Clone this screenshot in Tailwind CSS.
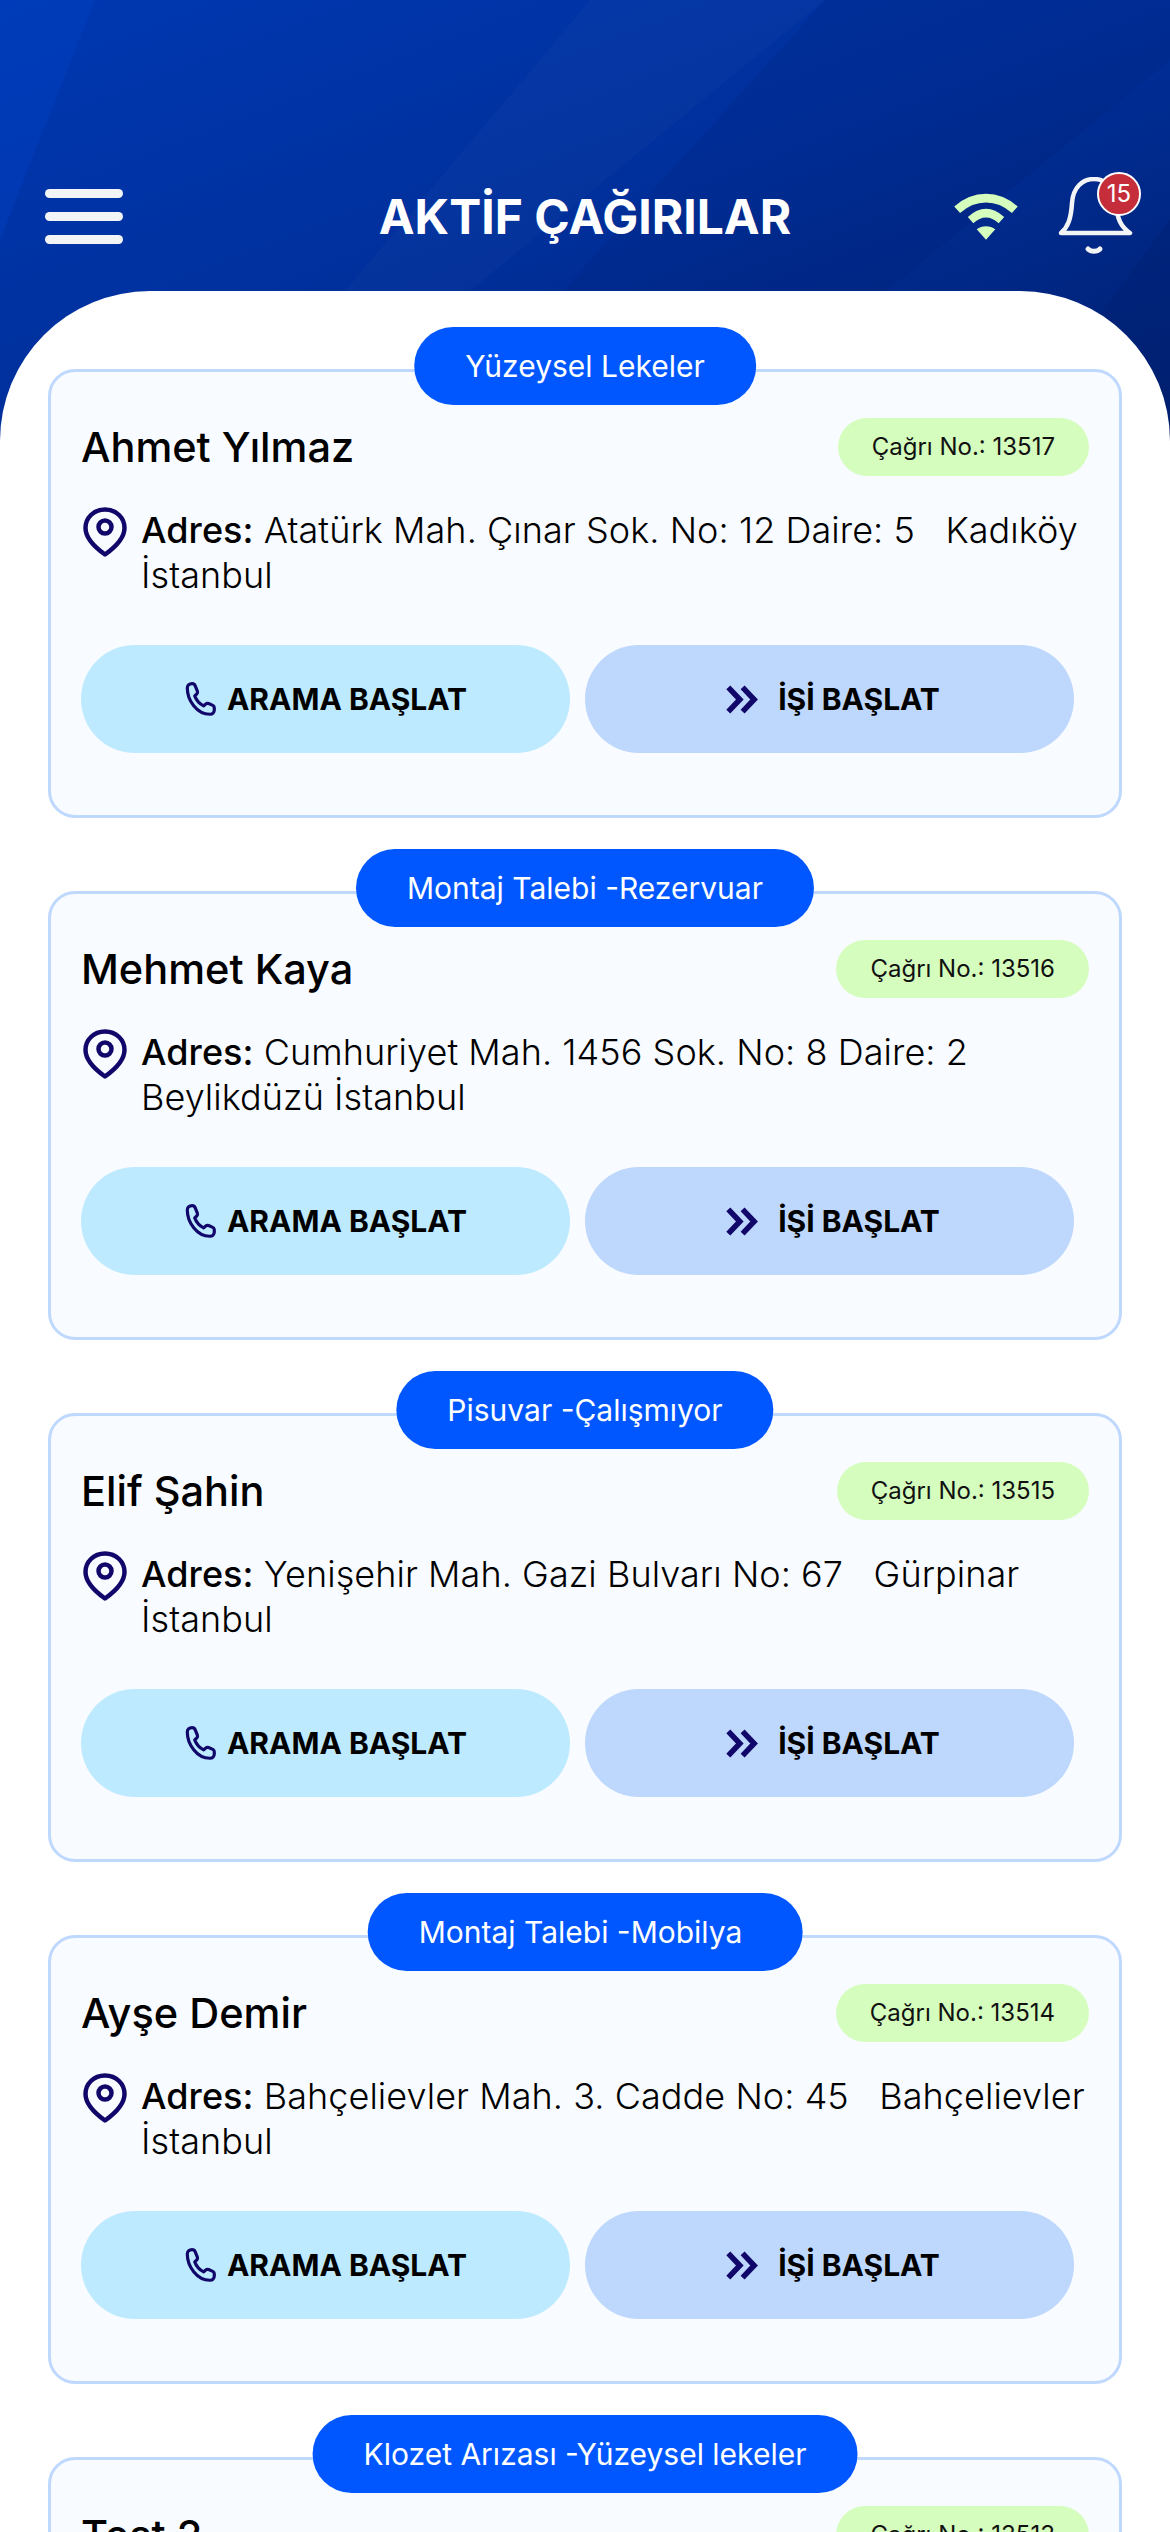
<!DOCTYPE html>
<html lang="tr">
<head>
    <meta charset="UTF-8">
    <meta name="viewport" content="width=device-width, initial-scale=1.0">
    <script src="https://cdn.jsdelivr.net/npm/@tailwindcss/browser@4"></script>
    <title>Aktif Çağırılar</title>
</head>
<body class="bg-white font-[Inter,sans-serif]">
    <svg class="hidden">
        <symbol id="pin" viewBox="0 0 44 50">
            <path d="M22 2.500C10.500 2.500 2.500 11 2.500 21c0 10 9 19 19.500 26.500C32.500 40 41.500 31 41.500 21 41.500 11 33.500 2.500 22 2.500Z" fill="none" stroke="#11076a" stroke-width="4.500" stroke-linejoin="round"/>
            <circle cx="22" cy="20" r="6.500" fill="none" stroke="#11076a" stroke-width="4.500"/>
        </symbol>
        <symbol id="phone" viewBox="0 0 30 34">
            <path d="M3 6.500C3 4 5 2.500 7.500 2.500c1.500 0 2.500.8 3 2l2 5c.4 1 .2 2-.6 2.800L10 14c1.500 4 4.500 7.500 8.500 9.500l1.800-1.700c.8-.7 1.800-.9 2.800-.5l3.500 1.500c1.200.5 1.900 1.500 1.900 2.800v1.900c0 2.300-1.700 3.900-4 3.900C12 31.500 3 18 3 6.500Z" fill="none" stroke="#11076a" stroke-width="3" stroke-linejoin="round"/>
        </symbol>
        <symbol id="chevrons" viewBox="0 0 30 28">
            <path d="M3 3l10.500 11L3 25M16 3l10.500 11L16 25" fill="none" stroke="#11076a" stroke-width="5" stroke-linejoin="miter"/>
        </symbol>
    </svg>

    <div class="h-[2532px] overflow-hidden">
        <!-- Header -->
        <header class="relative h-[450px] -mb-[159px] overflow-hidden bg-linear-to-br from-[#0038b2] via-[#002f9a] to-[#001f6f]">
            <svg class="absolute inset-0 w-full h-full" viewBox="0 0 1170 450" preserveAspectRatio="none">
                <polygon points="0,0 95,0 0,240" fill="#0042c4" opacity=".4"/>
                <polygon points="590,0 825,0 470,291 345,291" fill="#ffffff" opacity=".02"/>
                <polygon points="825,0 1170,0 1170,60 690,450 420,450" fill="#001a66" opacity=".12"/>
                <polygon points="1170,220 1170,450 1000,450" fill="#001a66" opacity=".25"/>
            </svg>
            <div class="relative flex items-start justify-between h-[291px] pt-[177px] pl-[45px] pr-[36px]">
                <div class="flex flex-col gap-[14px] w-[78px] mt-[12px]">
                    <span class="h-[9px] rounded-full bg-[#f3f4f6]"></span>
                    <span class="h-[9px] rounded-full bg-[#f3f4f6]"></span>
                    <span class="h-[9px] rounded-full bg-[#f3f4f6]"></span>
                </div>
                <h1 class="absolute left-0 right-0 top-[187px] text-center text-[48px] leading-[60px] font-bold text-white">AKTİF ÇAĞIRILAR</h1>
                <div class="flex items-start gap-[38px]">
                    <svg class="w-[68px] h-[50px] mt-[15px]" viewBox="0 0 66 48">
                        <path d="M5 17C22 2 44 2 61 17" fill="none" stroke="#d5fdbd" stroke-width="8.500"/>
                        <path d="M18 27C28 18 38 18 48 27" fill="none" stroke="#d5fdbd" stroke-width="8"/>
                        <path d="M24 36C29 32 37 32 42 36L33 46Z" fill="#d5fdbd"/>
                    </svg>
                    <div class="relative w-[76px] h-[80px]">
                        <svg class="w-[76px] h-[80px]" viewBox="0 0 76 80">
                            <path d="M3 56c7-6 10-14 11-30C15 10 25 2 36 2s20 8 22 24c1 16 5 24 14 30Z" fill="none" stroke="#f3f4f6" stroke-width="4.500" stroke-linejoin="round"/>
                            <path d="M30 72c3 3 9 3 12 0" fill="none" stroke="#f3f4f6" stroke-width="5" stroke-linecap="round"/>
                        </svg>
                        <span class="absolute -top-[5px] left-[39px] w-[44px] h-[44px] flex items-center justify-center rounded-full border-2 border-white bg-[#c62d3a] text-white text-[24px] leading-none">15</span>
                    </div>
                </div>
            </div>
        </header>

        <!-- Calls -->
        <main class="relative bg-white rounded-t-[150px] pt-[78px] px-[48px] flex flex-col gap-[73px]">

            <article class="relative h-[449px] border-[3px] border-[#bfd8fe] rounded-[27px] bg-[#f8fbff] pt-[46px] px-[30px]">
                <div class="absolute -top-[45px] left-1/2 -translate-x-1/2 h-[78px] px-[51px] flex items-center whitespace-nowrap rounded-full bg-[#0057ff] text-white text-[30px]">Yüzeysel Lekeler</div>
                <div class="flex items-center justify-between h-[58px]">
                    <h2 class="text-[41.5px] font-medium text-black">Ahmet Yılmaz</h2>
                    <span class="h-[58px] px-[34px] flex items-center rounded-full bg-[#d5fdbd] text-[24px] text-[#111]">Çağrı No.: 13517</span>
                </div>
                <div class="flex gap-[14px] mt-[32px] h-[90px] pl-[2px]">
                    <svg class="w-[44px] h-[50px] shrink-0 -mt-[1px]"><use href="#pin"/></svg>
                    <p class="text-[36px] leading-[45px] font-light tracking-[0.06px] text-black whitespace-pre-wrap"><b class="font-medium">Adres:</b> Atatürk Mah. Çınar Sok. No: 12 Daire: 5   Kadıköy İstanbul</p>
                </div>
                <div class="grid grid-cols-2 gap-[15px] mt-[47px] mr-[15px]">
                    <button class="h-[108px] flex items-center justify-center gap-[11px] rounded-full bg-[#bdeaff] text-[30px] font-bold text-black"><svg class="w-[32px] h-[36px]"><use href="#phone"/></svg>ARAMA BAŞLAT</button>
                    <button class="h-[108px] pl-[6px] flex items-center justify-center gap-[20px] rounded-full bg-[#bed7fd] text-[30px] font-bold text-black"><svg class="w-[33px] h-[31px]"><use href="#chevrons"/></svg>İŞİ BAŞLAT</button>
                </div>
            </article>

            <article class="relative h-[449px] border-[3px] border-[#bfd8fe] rounded-[27px] bg-[#f8fbff] pt-[46px] px-[30px]">
                <div class="absolute -top-[45px] left-1/2 -translate-x-1/2 h-[78px] px-[51px] flex items-center whitespace-nowrap rounded-full bg-[#0057ff] text-white text-[30px]">Montaj Talebi -Rezervuar</div>
                <div class="flex items-center justify-between h-[58px]">
                    <h2 class="text-[41.5px] font-medium text-black">Mehmet Kaya</h2>
                    <span class="h-[58px] px-[34px] flex items-center rounded-full bg-[#d5fdbd] text-[24px] text-[#111]">Çağrı No.: 13516</span>
                </div>
                <div class="flex gap-[14px] mt-[32px] h-[90px] pl-[2px]">
                    <svg class="w-[44px] h-[50px] shrink-0 -mt-[1px]"><use href="#pin"/></svg>
                    <p class="text-[36px] leading-[45px] font-light tracking-[0.06px] text-black whitespace-pre-wrap"><b class="font-medium">Adres:</b> Cumhuriyet Mah. 1456 Sok. No: 8 Daire: 2   Beylikdüzü İstanbul</p>
                </div>
                <div class="grid grid-cols-2 gap-[15px] mt-[47px] mr-[15px]">
                    <button class="h-[108px] flex items-center justify-center gap-[11px] rounded-full bg-[#bdeaff] text-[30px] font-bold text-black"><svg class="w-[32px] h-[36px]"><use href="#phone"/></svg>ARAMA BAŞLAT</button>
                    <button class="h-[108px] pl-[6px] flex items-center justify-center gap-[20px] rounded-full bg-[#bed7fd] text-[30px] font-bold text-black"><svg class="w-[33px] h-[31px]"><use href="#chevrons"/></svg>İŞİ BAŞLAT</button>
                </div>
            </article>

            <article class="relative h-[449px] border-[3px] border-[#bfd8fe] rounded-[27px] bg-[#f8fbff] pt-[46px] px-[30px]">
                <div class="absolute -top-[45px] left-1/2 -translate-x-1/2 h-[78px] px-[51px] flex items-center whitespace-nowrap rounded-full bg-[#0057ff] text-white text-[30px]">Pisuvar -Çalışmıyor</div>
                <div class="flex items-center justify-between h-[58px]">
                    <h2 class="text-[41.5px] font-medium text-black">Elif Şahin</h2>
                    <span class="h-[58px] px-[34px] flex items-center rounded-full bg-[#d5fdbd] text-[24px] text-[#111]">Çağrı No.: 13515</span>
                </div>
                <div class="flex gap-[14px] mt-[32px] h-[90px] pl-[2px]">
                    <svg class="w-[44px] h-[50px] shrink-0 -mt-[1px]"><use href="#pin"/></svg>
                    <p class="text-[36px] leading-[45px] font-light tracking-[0.06px] text-black whitespace-pre-wrap"><b class="font-medium">Adres:</b> Yenişehir Mah. Gazi Bulvarı No: 67   Gürpinar İstanbul</p>
                </div>
                <div class="grid grid-cols-2 gap-[15px] mt-[47px] mr-[15px]">
                    <button class="h-[108px] flex items-center justify-center gap-[11px] rounded-full bg-[#bdeaff] text-[30px] font-bold text-black"><svg class="w-[32px] h-[36px]"><use href="#phone"/></svg>ARAMA BAŞLAT</button>
                    <button class="h-[108px] pl-[6px] flex items-center justify-center gap-[20px] rounded-full bg-[#bed7fd] text-[30px] font-bold text-black"><svg class="w-[33px] h-[31px]"><use href="#chevrons"/></svg>İŞİ BAŞLAT</button>
                </div>
            </article>

            <article class="relative h-[449px] border-[3px] border-[#bfd8fe] rounded-[27px] bg-[#f8fbff] pt-[46px] px-[30px]">
                <div class="absolute -top-[45px] left-1/2 -translate-x-1/2 h-[78px] pl-[51px] pr-[60px] flex items-center whitespace-nowrap rounded-full bg-[#0057ff] text-white text-[30px]">Montaj Talebi -Mobilya</div>
                <div class="flex items-center justify-between h-[58px]">
                    <h2 class="text-[41.5px] font-medium text-black">Ayşe Demir</h2>
                    <span class="h-[58px] px-[34px] flex items-center rounded-full bg-[#d5fdbd] text-[24px] text-[#111]">Çağrı No.: 13514</span>
                </div>
                <div class="flex gap-[14px] mt-[32px] h-[90px] pl-[2px]">
                    <svg class="w-[44px] h-[50px] shrink-0 -mt-[1px]"><use href="#pin"/></svg>
                    <p class="text-[36px] leading-[45px] font-light tracking-[0.06px] text-black whitespace-pre-wrap"><b class="font-medium">Adres:</b> Bahçelievler Mah. 3. Cadde No: 45   Bahçelievler İstanbul</p>
                </div>
                <div class="grid grid-cols-2 gap-[15px] mt-[47px] mr-[15px]">
                    <button class="h-[108px] flex items-center justify-center gap-[11px] rounded-full bg-[#bdeaff] text-[30px] font-bold text-black"><svg class="w-[32px] h-[36px]"><use href="#phone"/></svg>ARAMA BAŞLAT</button>
                    <button class="h-[108px] pl-[6px] flex items-center justify-center gap-[20px] rounded-full bg-[#bed7fd] text-[30px] font-bold text-black"><svg class="w-[33px] h-[31px]"><use href="#chevrons"/></svg>İŞİ BAŞLAT</button>
                </div>
            </article>

            <article class="relative h-[449px] border-[3px] border-[#bfd8fe] rounded-[27px] bg-[#f8fbff] pt-[46px] px-[30px]">
                <div class="absolute -top-[45px] left-1/2 -translate-x-1/2 h-[78px] px-[51px] flex items-center whitespace-nowrap rounded-full bg-[#0057ff] text-white text-[30px]">Klozet Arızası -Yüzeysel lekeler</div>
                <div class="flex items-center justify-between h-[58px]">
                    <h2 class="text-[41.5px] font-medium text-black">Test 2</h2>
                    <span class="h-[58px] px-[34px] flex items-center rounded-full bg-[#d5fdbd] text-[24px] text-[#111]">Çağrı No.: 13513</span>
                </div>
            </article>
        </main>
    </div>
</body>
</html>
